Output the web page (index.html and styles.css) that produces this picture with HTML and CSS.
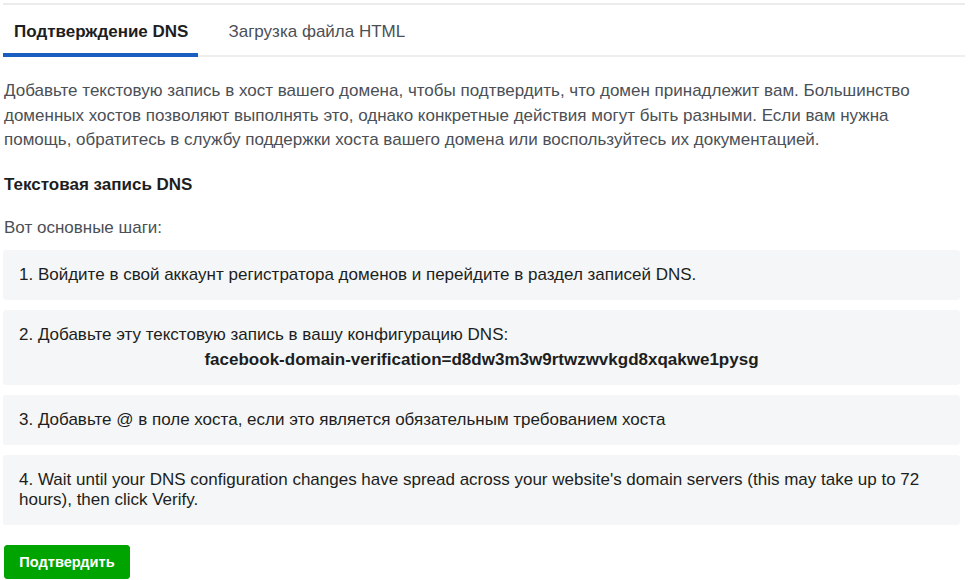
FILE: index.html
```html
<!doctype html>
<html>
<head>
<meta charset="utf-8">
<title>Подтверждение домена</title>
<link rel="stylesheet" href="styles.css">
</head>
<body>
<div class="wrap">
	<div class="tabs">
		<span class="tab active">Подтверждение DNS</span>
		<span class="tab">Загрузка файла HTML</span>
	</div>
	<p class="intro">Добавьте текстовую запись в хост вашего домена, чтобы подтвердить, что домен принадлежит вам. Большинство доменных хостов позволяют выполнять это, однако конкретные действия могут быть разными. Если вам нужна помощь, обратитесь в службу поддержки хоста вашего домена или воспользуйтесь их документацией.</p>
	<h3 class="title">Текстовая запись DNS</h3>
	<p class="sub">Вот основные шаги:</p>
	<div class="step">1. Войдите в свой аккаунт регистратора доменов и перейдите в раздел записей DNS.</div>
	<div class="step">
		2. Добавьте эту текстовую запись в вашу конфигурацию DNS:
		<div class="code">facebook-domain-verification=d8dw3m3w9rtwzwvkgd8xqakwe1pysg</div>
	</div>
	<div class="step">3. Добавьте @ в поле хоста, если это является обязательным требованием хоста</div>
	<div class="step">4. Wait until your DNS configuration changes have spread across your website's domain servers (this may take up to 72 hours), then click Verify.</div>
	<button class="btn_ok">Подтвердить</button>
</div>
</body>
</html>
```

FILE: styles.css
```css
*{margin:0; padding:0; box-sizing:border-box;}
body{font-family:"Liberation Sans", Arial, sans-serif; background:#fff; color:#1c1e21;}
.wrap{width:962px; margin-left:3px; border-top:2px solid #ececec; margin-top:3px;}

.tabs{display:flex; border-bottom:2px solid #eeeeee; padding-top:6px;}
.tab{font-size:17px; color:#4b4f56; padding:0 11px; line-height:42px; margin-right:8px; margin-bottom:-2px; border-bottom:4px solid transparent;}
.tab.active{font-weight:bold; color:#1c1e21; border-bottom-color:#1a5fbf; padding:0 10px 0 11px; margin-right:19px;}

.intro{font-size:17px; line-height:24.5px; color:#4b4f56; margin:22px 0 0 1px; padding-right:40px;}
.title{font-size:17px; font-weight:bold; line-height:24px; margin:20px 0 0 1px;}
.sub{font-size:17px; line-height:24px; color:#4b4f56; margin:19px 0 10px 1px;}

.step{background:#f5f6f7; border-radius:3px; padding:15px 16px; font-size:17px; line-height:20px; margin-bottom:10px; margin-right:5px;}
.code{font-weight:bold; text-align:center; margin-top:5px;}

.btn_ok{margin:10px 0 0 1px; background:#00a400; color:#fff; border:1px solid #00a400; border-radius:3px; font-family:"Liberation Sans", Arial, sans-serif; font-weight:bold; font-size:14.6px; width:126px; height:34px; cursor:pointer;}
```
